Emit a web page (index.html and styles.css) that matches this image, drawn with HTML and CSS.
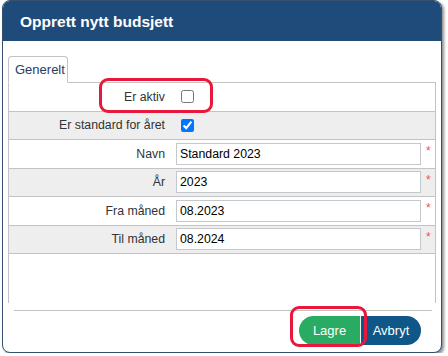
FILE: index.html
```html
<!DOCTYPE html>
<html>
<head>
<meta charset="utf-8">
<link rel="stylesheet" href="styles.css">
</head>
<body>
<div class="dialog">
  <div class="header">Opprett nytt budsjett</div>
  <div class="content">
    <div class="tabs"><div class="tab">Generelt</div></div>
    <div class="panel">
      <div class="row">
        <div class="label">Er aktiv</div>
        <div class="field"><input type="checkbox" class="cb"></div>
      </div>
      <div class="row alt">
        <div class="label">Er standard for året</div>
        <div class="field"><input type="checkbox" class="cb" checked></div>
      </div>
      <div class="row">
        <div class="label">Navn</div>
        <div class="field"><input type="text" class="txt" value="Standard 2023"><span class="req">*</span></div>
      </div>
      <div class="row alt">
        <div class="label">År</div>
        <div class="field"><input type="text" class="txt" value="2023"><span class="req">*</span></div>
      </div>
      <div class="row">
        <div class="label">Fra måned</div>
        <div class="field"><input type="text" class="txt" value="08.2023"><span class="req">*</span></div>
      </div>
      <div class="row alt">
        <div class="label">Til måned</div>
        <div class="field"><input type="text" class="txt" value="08.2024"><span class="req">*</span></div>
      </div>
    </div>
    <div class="footer">
      <button class="btn save">Lagre</button><button class="btn cancel">Avbryt</button>
    </div>
  </div>
</div>
<div class="mark mark-active"></div>
<div class="mark mark-save"></div>
</body>
</html>
```
FILE: styles.css
```css
html, body {
  margin: 0;
  padding: 0;
  background: #fff;
  font-family: "Liberation Sans", Arial, sans-serif;
}
.dialog {
  position: relative;
  margin-left: 2px;
  width: 440px;
  height: 353px;
  box-sizing: border-box;
  border: 1px solid #34506e;
  border-radius: 8px;
  box-shadow: 2px 2px 3px rgba(0,0,0,0.45);
  display: flex;
  flex-direction: column;
  overflow: hidden;
  background: #fff;
}
.header {
  height: 40px;
  background: #1f4b7b;
  color: #fff;
  font-weight: bold;
  font-size: 15.5px;
  line-height: 41px;
  padding-left: 17px;
  flex: none;
}
.content {
  flex: 1;
  display: flex;
  flex-direction: column;
  padding: 15px 5px 0 5px;
}
.tabs {
  display: flex;
  height: 27px;
  position: relative;
  z-index: 1;
  margin-bottom: -1px;
}
.tab {
  width: 60px;
  height: 27px;
  box-sizing: border-box;
  border: 1px solid #c3c3c3;
  border-bottom: 1px solid #fff;
  border-radius: 4px 4px 0 0;
  font-size: 13px;
  color: #1e3d6b;
  line-height: 26px;
  padding-left: 6px;
  background: #fff;
}
.panel {
  height: 221px;
  box-sizing: border-box;
  border: 1px solid #c3c3c3;
  border-bottom: none;
  display: flex;
  flex-direction: column;
}
.row {
  height: 28.5px;
  box-sizing: border-box;
  border-bottom: 1px solid #c3c3c3;
  display: flex;
  align-items: center;
  background: #fff;
}
.row.alt {
  background: #eeeeee;
}
.label {
  width: 156px;
  text-align: right;
  font-size: 12.3px;
  color: #333;
  padding-right: 11px;
  flex: none;
}
.field {
  flex: 1;
  display: flex;
  height: 100%;
  align-items: center;
}
.cb {
  margin: 0 0 0 5px;
  width: 13px;
  height: 13px;
}
.txt {
  width: 245px;
  height: 22px;
  box-sizing: border-box;
  border: 1px solid #c4c8cc;
  font-family: "Liberation Sans", Arial, sans-serif;
  font-size: 12.3px;
  color: #000;
  padding: 0 3px;
  margin: 0;
  background: #fff;
}
.req {
  align-self: flex-start;
  color: #f0524f;
  font-size: 12px;
  margin: 4px 0 0 5px;
}
.footer {
  margin: 7px 4px 0 6px;
  border-top: 1px solid #c3c3c3;
  display: flex;
  justify-content: flex-end;
  padding: 5px 11px 0 0;
}
.btn {
  height: 29px;
  border: none;
  color: #fff;
  font-family: "Liberation Sans", Arial, sans-serif;
  font-size: 13px;
  padding: 0;
  margin: 0;
}
.save {
  width: 62px;
  background: #29ab63;
  border-radius: 15px 0 0 15px;
  border-right: 1px solid #eaf3ee;
}
.cancel {
  width: 60px;
  background: #0e5788;
  border-radius: 0 15px 15px 0;
}
.mark {
  position: absolute;
  border: 3px solid #e8183d;
  border-radius: 9px;
  box-sizing: border-box;
}
.mark-active {
  left: 99px;
  top: 78px;
  width: 114px;
  height: 35px;
}
.mark-save {
  left: 290px;
  top: 306px;
  width: 77px;
  height: 41px;
}
```
